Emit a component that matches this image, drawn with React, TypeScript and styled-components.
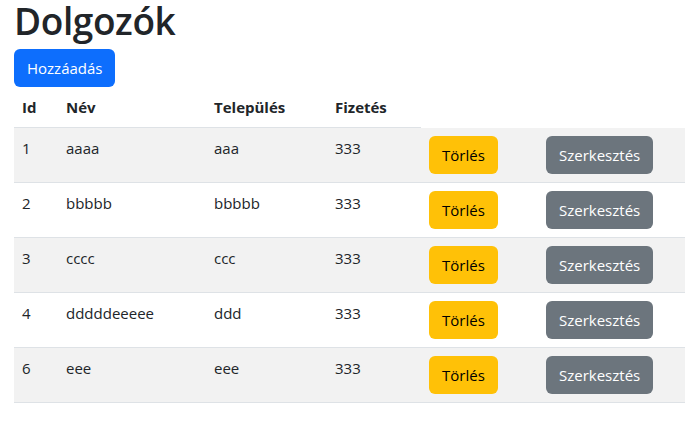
import React from "react";
import styled, { createGlobalStyle } from "styled-components";

const Global = createGlobalStyle`
  html, body { margin: 0; padding: 0; background: #fff; }
  body {
    font-family: "Open Sans", "Noto Sans", "Liberation Sans", sans-serif;
    color: #212529;
    font-size: 15px;
    line-height: 24px;
  }
`;

const Page = styled.div`
  padding: 0 0 0 14px;
`;

const Title = styled.h1`
  margin: 0 0 8px 0;
  font-size: 37px;
  font-weight: 600;
  line-height: 41px;
  letter-spacing: -0.4px;
`;

const Btn = styled.button<{ $variant: "primary" | "warning" | "secondary" }>`
  display: inline-block;
  font-family: inherit;
  font-size: 15px;
  line-height: 24px;
  padding: 6px 12px;
  border-radius: 6px;
  border: 1px solid transparent;
  cursor: pointer;
  background: ${(p) =>
    p.$variant === "primary" ? "#0d6efd" : p.$variant === "warning" ? "#ffc107" : "#6c757d"};
  color: ${(p) => (p.$variant === "warning" ? "#000" : "#fff")};
`;

const Toolbar = styled.div`
  display: flex;
  height: 38px;
`;

const Table = styled.table`
  border-collapse: collapse;
  width: 671px;
  table-layout: fixed;
`;

const Col = styled.col<{ $w: number }>`
  width: ${(p) => p.$w}px;
`;

const Th = styled.th`
  text-align: left;
  font-weight: 700;
  padding: 8px;
  border-bottom: 1px solid #dee2e6;
  vertical-align: bottom;
`;

const Row = styled.tr<{ $striped: boolean }>`
  background: ${(p) => (p.$striped ? "#f2f2f2" : "#fff")};
`;

const Td = styled.td`
  padding: 8px;
  border-bottom: 1px solid #dee2e6;
  vertical-align: top;
`;

const rows = [
  { id: 1, nev: "aaaa", tel: "aaa", fiz: 333 },
  { id: 2, nev: "bbbbb", tel: "bbbbb", fiz: 333 },
  { id: 3, nev: "cccc", tel: "ccc", fiz: 333 },
  { id: 4, nev: "dddddeeeee", tel: "ddd", fiz: 333 },
  { id: 6, nev: "eee", tel: "eee", fiz: 333 },
];

export default function App() {
  return (
    <Page>
      <Global />
      <Title>Dolgozók</Title>
      <Toolbar>
        <Btn $variant="primary">Hozzáadás</Btn>
      </Toolbar>
      <Table>
        <colgroup>
          <Col $w={44} />
          <Col $w={148} />
          <Col $w={121} />
          <Col $w={94} />
          <Col $w={117} />
          <Col $w={147} />
        </colgroup>
        <thead>
          <tr>
            <Th>Id</Th>
            <Th>Név</Th>
            <Th>Település</Th>
            <Th>Fizetés</Th>
          </tr>
        </thead>
        <tbody>
          {rows.map((r, i) => (
            <Row key={r.id} $striped={i % 2 === 0}>
              <Td>{r.id}</Td>
              <Td>{r.nev}</Td>
              <Td>{r.tel}</Td>
              <Td>{r.fiz}</Td>
              <Td>
                <Btn $variant="warning">Törlés</Btn>
              </Td>
              <Td>
                <Btn $variant="secondary">Szerkesztés</Btn>
              </Td>
            </Row>
          ))}
        </tbody>
      </Table>
    </Page>
  );
}
